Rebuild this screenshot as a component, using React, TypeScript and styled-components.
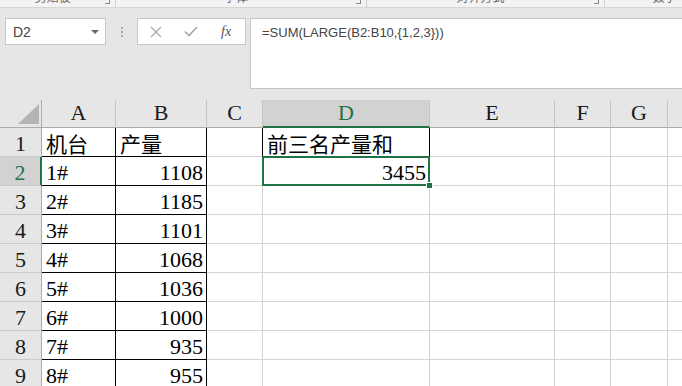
import { createGlobalStyle, styled } from 'styled-components'

const GlobalStyle = createGlobalStyle`
  html, body {
    margin: 0;
    padding: 0;
    background: #ffffff;
    overflow: hidden;
  }
  body {
    font-family: "Liberation Sans", "Noto Sans CJK SC", sans-serif;
  }
`

const Window = styled.div`
  width: 682px;
  height: 386px;
  display: flex;
  flex-direction: column;
  overflow: hidden;
  background: #e6e6e6;
`

// 顶部功能区被裁掉的分组标签
const RibbonStrip = styled.div`
  height: 7px;
  flex: none;
  display: flex;
  background: #f3f3f3;
  border-bottom: 1px solid #d6d6d6;
  overflow: hidden;
`

const RibbonGroup = styled.div<{ $w: number }>`
  width: ${(p) => p.$w}px;
  flex: none;
  display: flex;
  align-items: flex-start;
  border-right: 1px solid #cfcfcf;
  box-sizing: border-box;
`

const GroupLabel = styled.div`
  flex: 1;
  text-align: center;
  font-family: "Noto Sans CJK SC", sans-serif;
  font-size: 12px;
  line-height: 12px;
  margin-top: -9px;
  color: #6a6a6a;
`

const Launcher = styled.div`
  width: 4px;
  height: 3px;
  margin-right: 5px;
  border-right: 1px solid #8a8a8a;
  border-bottom: 1px solid #8a8a8a;
`

const FormulaArea = styled.div`
  height: 92px;
  flex: none;
  display: flex;
  align-items: flex-start;
  padding-top: 10px;
  box-sizing: border-box;
`

const NameBox = styled.div`
  width: 101px;
  height: 27px;
  margin-left: 5px;
  box-sizing: border-box;
  background: #ffffff;
  border: 1px solid #c6c6c6;
  display: flex;
  align-items: center;
  justify-content: space-between;
  padding: 0 6px 0 7px;
  font-size: 14px;
  color: #444;
`

const DropArrow = styled.div`
  width: 0;
  height: 0;
  border-left: 4px solid transparent;
  border-right: 4px solid transparent;
  border-top: 4px solid #6a6a6a;
`

const Grip = styled.div`
  width: 31px;
  height: 27px;
  display: flex;
  flex-direction: column;
  align-items: center;
  justify-content: center;
  gap: 2px;
`

const GripDot = styled.div`
  width: 2px;
  height: 2px;
  background: #a8a8a8;
`

const FxBox = styled.div`
  width: 109px;
  height: 27px;
  box-sizing: border-box;
  background: #ffffff;
  border: 1px solid #c6c6c6;
  display: flex;
  align-items: center;
  padding: 0 0 0 12px;
  gap: 22px;
`

const FxText = styled.span`
  font-family: "Liberation Serif", serif;
  font-style: italic;
  font-size: 14px;
  color: #555;
  margin-left: 1px;
`

const FormulaBar = styled.div`
  flex: 1;
  height: 71px;
  margin-left: 4px;
  box-sizing: border-box;
  background: #ffffff;
  border: 1px solid #c6c6c6;
  border-right: none;
  padding: 6px 11px;
  font-size: 13px;
  line-height: 15px;
  color: #444;
`

const Sheet = styled.div`
  flex: 1;
  display: grid;
  grid-template-columns: 42px 74px 91px 56px 167px 125px 56px 57px 70px;
  grid-template-rows: 28px repeat(10, 29px);
  background: #ffffff;
`

const Corner = styled.div`
  background: #e6e6e6;
  border-right: 1px solid #ababab;
  border-bottom: 1px solid #ababab;
  box-sizing: border-box;
  display: flex;
  align-items: flex-end;
  justify-content: flex-end;
  padding: 0 2px 3px 0;
`

const CornerTriangle = styled.div`
  width: 21px;
  height: 20px;
  background: #b4b4b4;
  clip-path: polygon(100% 0, 100% 100%, 0 100%);
`

const ColHead = styled.div<{ $active?: boolean }>`
  background: ${(p) => (p.$active ? '#d2d2d2' : '#e6e6e6')};
  color: ${(p) => (p.$active ? '#217346' : '#1a1a1a')};
  border-right: 1px solid #c4c4c4;
  border-bottom: ${(p) => (p.$active ? '2px solid #217346' : '1px solid #ababab')};
  box-sizing: border-box;
  display: flex;
  align-items: flex-end;
  justify-content: center;
  font-family: "Liberation Serif", serif;
  font-size: 22px;
  line-height: 25px;
  padding-bottom: ${(p) => (p.$active ? 1 : 2)}px;
`

const RowHead = styled.div<{ $active?: boolean }>`
  background: ${(p) => (p.$active ? '#d2d2d2' : '#e6e6e6')};
  color: ${(p) => (p.$active ? '#217346' : '#1a1a1a')};
  border-right: ${(p) => (p.$active ? '2px solid #217346' : '1px solid #ababab')};
  border-bottom: 1px solid #cacaca;
  box-sizing: border-box;
  display: flex;
  align-items: flex-end;
  justify-content: center;
  font-family: "Liberation Serif", serif;
  font-size: 22px;
  line-height: 25px;
`

const Cell = styled.div<{ $align?: 'left' | 'right'; $edge?: string; $rightEdge?: string; $selected?: boolean }>`
  position: relative;
  z-index: ${(p) => (p.$selected ? 2 : 0)};
  border-right: 1px solid ${(p) => p.$rightEdge || p.$edge || '#d4d4d4'};
  border-bottom: 1px solid ${(p) => p.$edge || '#d4d4d4'};
  box-sizing: border-box;
  display: flex;
  align-items: flex-end;
  justify-content: ${(p) => (p.$align === 'right' ? 'flex-end' : 'flex-start')};
  padding: 0 3px 0 4px;
  font-family: "Liberation Serif", "Noto Sans CJK SC", serif;
  font-size: 22px;
  line-height: 25px;
  color: #000;
  white-space: nowrap;

  ${(p) =>
    p.$selected &&
    `
    &::after {
      content: '';
      position: absolute;
      top: -1px;
      left: -1px;
      right: -1px;
      bottom: -1px;
      border: 2px solid #217346;
    }
    &::before {
      content: '';
      position: absolute;
      right: -4px;
      bottom: -4px;
      width: 5px;
      height: 5px;
      background: #217346;
      border: 1px solid #ffffff;
      z-index: 3;
    }
  `}
`

const CjkText = styled.span`
  font-family: "Noto Sans CJK SC", sans-serif;
  font-size: 21px;
  line-height: 25px;
`

const columns = ['A', 'B', 'C', 'D', 'E', 'F', 'G', 'H']

const output = [1108, 1185, 1101, 1068, 1036, 1000, 935, 955]

type CellDef = {
  text?: string
  cjk?: boolean
  align?: 'left' | 'right'
  edge?: string
  rightEdge?: string
  selected?: boolean
}

function buildRow(r: number): CellDef[] {
  const cells: CellDef[] = columns.map(() => ({}))
  if (r === 1) {
    cells[0] = { text: '机台', cjk: true, edge: '#000' }
    cells[1] = { text: '产量', cjk: true, edge: '#000' }
    cells[2] = { rightEdge: '#000' }
    cells[3] = { text: '前三名产量和', cjk: true, edge: '#000' }
  } else {
    const v = output[r - 2]
    if (v !== undefined) {
      cells[0] = { text: `${r - 1}#`, edge: '#000' }
      cells[1] = { text: String(v), align: 'right', edge: '#000' }
    } else {
      cells[0] = { edge: '#000' }
      cells[1] = { edge: '#000' }
    }
  }
  if (r === 2) cells[3] = { text: '3455', align: 'right', selected: true }
  return cells
}

function CloseIcon() {
  return (
    <svg width="12" height="12" viewBox="0 0 12 12">
      <path d="M1 1 L11 11 M11 1 L1 11" stroke="#a9a9a9" strokeWidth="1.3" fill="none" />
    </svg>
  )
}

function CheckIcon() {
  return (
    <svg width="14" height="11" viewBox="0 0 14 11">
      <path d="M1 5.5 L5 9.5 L13 1" stroke="#a9a9a9" strokeWidth="1.6" fill="none" />
    </svg>
  )
}

export default function App() {
  const rows = Array.from({ length: 10 }, (_, i) => i + 1)
  return (
    <>
      <GlobalStyle />
      <Window>
        <RibbonStrip>
          <RibbonGroup $w={116}>
            <GroupLabel>剪贴板</GroupLabel>
            <Launcher />
          </RibbonGroup>
          <RibbonGroup $w={251}>
            <GroupLabel>字体</GroupLabel>
            <Launcher />
          </RibbonGroup>
          <RibbonGroup $w={238}>
            <GroupLabel>对齐方式</GroupLabel>
            <Launcher />
          </RibbonGroup>
          <RibbonGroup $w={130}>
            <GroupLabel>数字</GroupLabel>
            <Launcher />
          </RibbonGroup>
        </RibbonStrip>

        <FormulaArea>
          <NameBox>
            <span>D2</span>
            <DropArrow />
          </NameBox>
          <Grip>
            <GripDot />
            <GripDot />
            <GripDot />
          </Grip>
          <FxBox>
            <CloseIcon />
            <CheckIcon />
            <FxText>fx</FxText>
          </FxBox>
          <FormulaBar>=SUM(LARGE(B2:B10,{'{'}1,2,3{'}'}))</FormulaBar>
        </FormulaArea>

        <Sheet>
          <Corner>
            <CornerTriangle />
          </Corner>
          {columns.map((c) => (
            <ColHead key={c} $active={c === 'D'}>
              {c}
            </ColHead>
          ))}
          {rows.map((r) => {
            const cells = buildRow(r)
            return [
              <RowHead key={`h${r}`} $active={r === 2}>
                {r}
              </RowHead>,
              ...cells.map((cell, i) => (
                <Cell
                  key={`${r}-${i}`}
                  $align={cell.align}
                  $edge={cell.edge}
                  $rightEdge={cell.rightEdge}
                  $selected={cell.selected}
                >
                  {cell.cjk ? <CjkText>{cell.text}</CjkText> : cell.text}
                </Cell>
              )),
            ]
          })}
        </Sheet>
      </Window>
    </>
  )
}
